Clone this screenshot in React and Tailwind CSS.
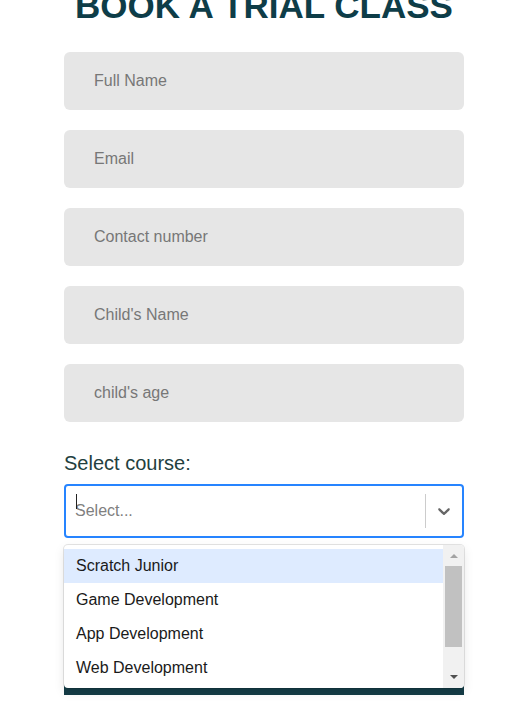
import React from "react";

const fields = ["Full Name", "Email", "Contact number", "Child's Name", "child's age"];
const courses = ["Scratch Junior", "Game Development", "App Development", "Web Development", "Robotics"];

const App = () => {
  return (
    <div className="bg-white min-h-screen overflow-hidden font-['Liberation_Sans',Arial,sans-serif]">
      <div className="w-[400px] ml-[64px] flex flex-col">
        {/* HEADING (page is scrolled, top is cut) */}
        <h1 className="mt-[-12px] text-center text-[35px] leading-none font-bold text-[#0e3d48] whitespace-nowrap">
          BOOK A TRIAL CLASS
        </h1>

        {/* TEXT FIELDS */}
        <div className="mt-[29px] flex flex-col gap-[20px]">
          {fields.map((f) => (
            <input
              key={f}
              placeholder={f}
              className="h-[58px] w-full rounded-[6px] bg-[#e6e6e6] px-[30px] text-[16px] text-[#333] placeholder:text-[#777] outline-none"
            />
          ))}
        </div>

        <label className="mt-[29px] mb-[9px] block text-[20px] leading-[24px] text-[#233f40]">Select course:</label>

        {/* SELECT */}
        <div className="relative">
          <div className="h-[54px] flex items-center rounded-[4px] border-2 border-[#2684ff] bg-white">
            <div className="relative flex-1 pl-[9px] text-[16px] text-[#808080]">
              Select...
              <span className="absolute left-[10px] top-[-5px] h-[15px] w-px bg-[#222]" />
            </div>
            <span className="h-[34px] w-px bg-[#cccccc]" />
            <div className="w-[36px] flex items-center justify-center text-[#666]">
              <svg width="20" height="20" viewBox="0 0 20 20" fill="currentColor">
                <path d="M4.516 7.548c0.436-0.446 1.043-0.481 1.576 0l3.908 3.747 3.908-3.747c0.533-0.481 1.141-0.446 1.574 0 0.436 0.445 0.408 1.197 0 1.615-0.406 0.418-4.695 4.502-4.695 4.502-0.217 0.223-0.502 0.335-0.787 0.335s-0.57-0.112-0.789-0.335c0 0-4.287-4.084-4.695-4.502s-0.436-1.17 0-1.615z" />
              </svg>
            </div>
          </div>

          {/* DROPDOWN MENU */}
          <div className="absolute left-0 right-0 top-full mt-[7px] z-10 h-[143px] flex rounded-[4px] bg-white overflow-hidden shadow-[0_0_0_1px_rgba(0,0,0,0.1),0_4px_11px_rgba(0,0,0,0.1)]">
            <div className="flex-1 pt-[4px] overflow-hidden">
              {courses.map((c, i) => (
                <div
                  key={c}
                  className={`h-[34px] flex items-center px-[12px] text-[16px] text-[#1a1a1a] ${i === 0 ? "bg-[#deebff]" : ""}`}
                >
                  {c}
                </div>
              ))}
            </div>
            {/* scrollbar */}
            <div className="w-[21px] bg-[#f1f1f1] flex flex-col items-center">
              <div className="h-[21px] flex items-center justify-center">
                <span className="w-0 h-0 border-l-[4px] border-r-[4px] border-b-[4px] border-l-transparent border-r-transparent border-b-[#a3a3a3]" />
              </div>
              <div className="h-[81px] w-[17px] bg-[#c1c1c1]" />
              <div className="flex-1 flex items-end justify-center pb-[9px]">
                <span className="w-0 h-0 border-l-[4px] border-r-[4px] border-t-[4px] border-l-transparent border-r-transparent border-t-[#505050]" />
              </div>
            </div>
          </div>
        </div>

        {/* SUBMIT (mostly under the menu) */}
        <button className="mt-[104px] h-[53px] w-full bg-[#143c46] text-white text-[18px] font-bold">Submit</button>
        <div className="h-[40px]" />
      </div>
    </div>
  );
};

export default App;
